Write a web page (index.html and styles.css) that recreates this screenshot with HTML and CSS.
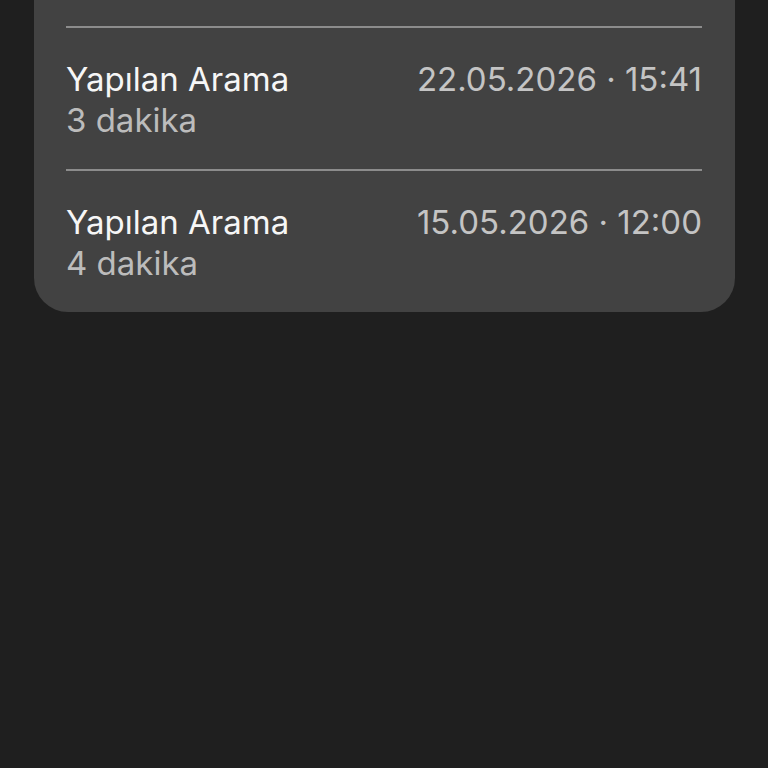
FILE: index.html
```html
<!DOCTYPE html>
<html lang="tr">

<head>
    <meta charset="UTF-8">
    <meta name="viewport" content="width=device-width, initial-scale=1.0">
    <title>Arama Geçmişi</title>
    <link rel="stylesheet" href="styles.css">
</head>

<body>

    <!-- Call history card -->
    <div class="call-card">
        <div class="call-row">
            <div class="call-info">
                <div class="call-type">Yapılan Arama</div>
                <div class="call-duration">3 dakika</div>
            </div>
            <div class="call-date">22.05.2026 · 15:41</div>
        </div>

        <div class="call-row">
            <div class="call-info">
                <div class="call-type">Yapılan Arama</div>
                <div class="call-duration">4 dakika</div>
            </div>
            <div class="call-date">15.05.2026 · 12:00</div>
        </div>
    </div>

</body>

</html>
```

FILE: styles.css
```css
body {
    margin: 0;
    background-color: #1f1f1f;
    font-family: Inter, "Noto Sans", sans-serif;
    height: 768px;
}

/* Card holding the calls */
.call-card {
    margin: 0 33px 0 34px;
    padding: 26px 33px 0 32px;
    background-color: #424242;
    border-radius: 0 0 34px 34px;
}

.call-row {
    display: flex;
    justify-content: space-between;
    align-items: flex-start;
    border-top: 2px solid #8c8c8c;
    padding: 31px 0 28px;
}

.call-type {
    font-size: 33px;
    line-height: 40px;
    color: #f6f6f6;
}

.call-duration {
    font-size: 33px;
    line-height: 42px;
    color: #bcbcbc;
}

.call-date {
    font-size: 33px;
    line-height: 40px;
    color: #c4c4c4;
}
```
